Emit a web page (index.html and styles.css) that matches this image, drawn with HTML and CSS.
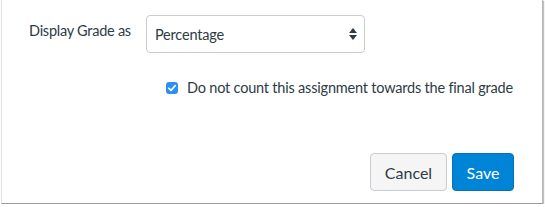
FILE: index.html
```html
<!DOCTYPE html>
<html lang="en">
<head>
    <meta charset="UTF-8">
    <title>Grade Options</title>
    <link rel="stylesheet" href="styles.css">
</head>
<body>
    <div class="panel">
        <div class="field">
            <label for="gradeType" class="field-label">Display Grade as</label>
            <div class="select-wrap">
                <select id="gradeType">
                    <option>Percentage</option>
                </select>
                <svg class="select-arrows" width="8" height="12" viewBox="0 0 8 12">
                    <path d="M4 0 L8 5 L0 5 Z" fill="#2d3b45"/>
                    <path d="M4 12 L8 7 L0 7 Z" fill="#2d3b45"/>
                </svg>
            </div>
        </div>

        <label class="check">
            <input type="checkbox" checked>
            <span class="box">
                <svg width="10" height="10" viewBox="0 0 10 10">
                    <path d="M1.8 5.2 L4 7.4 L8.2 2.6" fill="none" stroke="#fff" stroke-width="1.6" stroke-linecap="round" stroke-linejoin="round"/>
                </svg>
            </span>
            Do not count this assignment towards the final grade
        </label>

        <div class="actions">
            <button type="button" class="btn">Cancel</button>
            <button type="button" class="btn btn-primary">Save</button>
        </div>
    </div>
</body>
</html>
```

FILE: styles.css
```css
body {
    margin: 0;
    font-family: Lato, "Open Sans", sans-serif;
    color: #2d3b45;
    background: #fff;
}

.panel {
    box-sizing: border-box;
    width: 542px;
    height: 204px;
    margin-left: 1px;
    border-left: 1px solid #e2e2e2;
    border-right: 1px solid #b8b8b8;
    border-bottom: 1px solid #9a9a9a;
    box-shadow: 1px 1px 1px rgba(0, 0, 0, 0.25);
    padding: 15px 0 0 27px;
}

.field {
    display: flex;
    align-items: flex-start;
}

.field-label {
    width: 117px;
    font-size: 14.5px;
    letter-spacing: -0.25px;
    line-height: 17px;
    padding-top: 7px;
}

.select-wrap {
    position: relative;
    width: 219px;
}

select {
    appearance: none;
    -webkit-appearance: none;
    box-sizing: border-box;
    width: 100%;
    height: 38px;
    border: 1px solid #c7cdd1;
    border-radius: 4px;
    background: #fff;
    padding: 0 8px;
    font-family: inherit;
    font-size: 14.5px;
    letter-spacing: -0.2px;
    color: #2d3b45;
}

.select-arrows {
    position: absolute;
    right: 8px;
    top: 13px;
}

.check {
    display: flex;
    align-items: center;
    height: 17px;
    margin: 26px 0 0 137px;
    font-size: 14.5px;
    letter-spacing: -0.2px;
}

.check input {
    display: none;
}

.box {
    display: inline-flex;
    align-items: center;
    justify-content: center;
    width: 12px;
    height: 12px;
    border-radius: 3px;
    background: #2f8ff0;
    margin-right: 9px;
}

.actions {
    display: flex;
    justify-content: flex-end;
    gap: 5px;
    margin: 57px 28px 0 0;
}

.btn {
    box-sizing: border-box;
    height: 38px;
    width: 77px;
    border: 1px solid #c7cdd1;
    border-radius: 4px;
    background: #f5f5f5;
    color: #2d3b45;
    font-family: inherit;
    font-size: 16px;
    cursor: pointer;
}

.btn-primary {
    width: 62px;
    background: #0084d8;
    border-color: #0770b8;
    color: #fff;
}
```
